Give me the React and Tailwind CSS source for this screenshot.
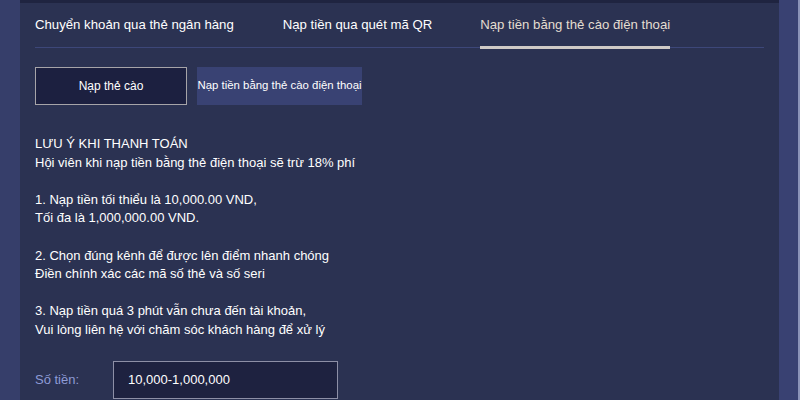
export default function App() {
  const tabs = ['Chuyển khoản qua thẻ ngân hàng', 'Nạp tiền qua quét mã QR', 'Nạp tiền bằng thẻ cào điện thoại'];
  const active = 2;

  return (
    <div
      className="w-[800px] h-[400px] flex bg-[#363e6a] overflow-hidden text-white"
      style={{ fontFamily: '"Liberation Sans", Arial, sans-serif' }}
    >
      <div className="w-[20px] shrink-0 bg-[#363e6a]" />
      <div className="w-[759px] shrink-0 flex flex-col bg-[#2b3252]">
        <div className="h-[3px] bg-[#1f2440]" />
        <div className="px-[15px]">
          {/* tabs */}
          <div className="flex border-b border-[#3d4779] h-[45px]">
            {tabs.map((t, i) => (
              <div
                key={i}
                className={`relative flex items-center text-[13.2px] ${
                  i === 0 ? 'mr-[49px]' : i === 1 ? 'mr-[48px]' : ''
                } ${i === active ? 'text-[#e4ddd0]' : 'text-white'}`}
              >
                <span>{t}</span>
                {i === active && (
                  <div className="absolute left-0 right-0 -bottom-[2px] h-[3px] bg-[#cfcac6]" />
                )}
              </div>
            ))}
          </div>

          {/* sub tabs */}
          <div className="flex gap-[10px] mt-[19px]">
            <button className="w-[152px] h-[38px] border border-[#a6a4a8] bg-[#1c2040] text-[12px] text-white">
              Nạp thẻ cào
            </button>
            <button className="w-[165px] h-[38px] bg-[#394273] text-[11.4px] text-white whitespace-nowrap">
              Nạp tiền bằng thẻ cào điện thoại
            </button>
          </div>

          {/* note */}
          <div className="mt-[30px] text-[13px] leading-[18.6px] text-white">
            LƯU Ý KHI THANH TOÁN
            <br />
            Hội viên khi nạp tiền bằng thẻ điện thoại sẽ trừ 18% phí
            <br />
            <br />
            1. Nạp tiền tối thiểu là 10,000.00 VND,
            <br />
            Tối đa là 1,000,000.00 VND.
            <br />
            <br />
            2. Chọn đúng kênh để được lên điểm nhanh chóng
            <br />
            Điền chính xác các mã số thẻ và số seri
            <br />
            <br />
            3. Nạp tiền quá 3 phút vẫn chưa đến tài khoản,
            <br />
            Vui lòng liên hệ với chăm sóc khách hàng để xử lý
          </div>

          {/* amount */}
          <div className="flex items-center mt-[21px]">
            <label className="w-[78px] text-[13px] text-[#8e9bd6]">Số tiền:</label>
            <div className="w-[225px] h-[38px] border border-[#8d8fa6] bg-[#1e2240] flex items-center px-[14px] text-[13px] text-white">
              10,000-1,000,000
            </div>
          </div>
        </div>
      </div>
      <div className="w-[19px] shrink-0 bg-[#394172]" />
      <div className="w-[2px] shrink-0 bg-[#8b93b8]" />
    </div>
  );
}
